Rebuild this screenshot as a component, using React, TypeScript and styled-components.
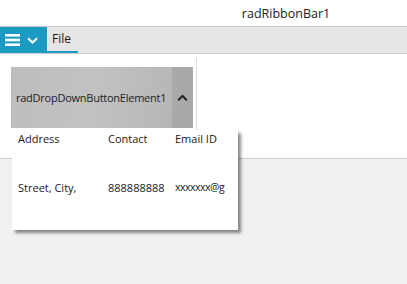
import React from 'react'
import styled, { createGlobalStyle } from 'styled-components'

const GlobalStyle = createGlobalStyle`
  html, body {
    margin: 0;
    padding: 0;
    background: #f0f0f0;
  }
  body {
    font-family: 'Open Sans', 'Noto Sans', sans-serif;
    color: #1a1a1a;
  }
`

const Window = styled.div`
  position: relative;
  width: 407px;
  height: 284px;
  display: flex;
  flex-direction: column;
  background: #f0f0f0;
  overflow: hidden;
`

const TitleBar = styled.div`
  height: 26px;
  background: #fff;
  display: flex;
  align-items: center;
  justify-content: center;
  padding-left: 165px;
  font-size: 12.5px;
  color: #222;
  border-bottom: 1px solid #c8c8c8;
`

const TabRow = styled.div`
  height: 26px;
  display: flex;
  background: #e6e6e6;
  border-bottom: 1px solid #cfcfcf;
`

const AppButton = styled.div`
  width: 47px;
  height: 26px;
  background: #1b9ac2;
  display: flex;
  align-items: center;
  gap: 7px;
  padding-left: 5px;
  box-sizing: border-box;
`

const Tab = styled.div<{ $active?: boolean }>`
  width: 31px;
  box-sizing: border-box;
  padding-left: 5px;
  font-size: 12px;
  line-height: 24px;
  border-bottom: 2px solid ${(p) => (p.$active ? '#1b9ac2' : 'transparent')};
`

const Ribbon = styled.div`
  height: 105px;
  background: #fff;
  border-bottom: 1px solid #cfcfcf;
  display: flex;
  align-items: stretch;
  padding: 4px 0 2px 0;
  box-sizing: border-box;
`

const Group = styled.div`
  width: 197px;
  box-sizing: border-box;
  padding: 9px 0 0 11px;
  border-right: 1px solid #dcdcdc;
`

const DropDownButton = styled.div`
  width: 182px;
  height: 61px;
  display: flex;
  background: linear-gradient(100deg, #bdbdbd 0%, #c2c2c2 45%, #b3b3b3 100%);
`

const DropLabel = styled.div`
  flex: 1;
  display: flex;
  align-items: center;
  padding-left: 5px;
  font-size: 11px;
  letter-spacing: -0.25px;
  color: #222;
`

const DropArrow = styled.div`
  width: 21px;
  background: #a9a9a9;
  display: flex;
  align-items: center;
  justify-content: center;
`

const Popup = styled.div`
  position: absolute;
  left: 12px;
  top: 130px;
  width: 226px;
  height: 100px;
  background: #fff;
  box-shadow: 3px 3px 3px rgba(0, 0, 0, 0.45);
  display: grid;
  grid-template-columns: 90px 67px 55px;
  grid-template-rows: 18px 1fr;
  padding-left: 6px;
  box-sizing: border-box;
`

const Cell = styled.div<{ $row?: boolean }>`
  font-size: 11px;
  white-space: nowrap;
  overflow: hidden;
  padding-top: ${(p) => (p.$row ? '32px' : '1px')};
`

const Email = styled(Cell)`
  font-size: 10.5px;
  letter-spacing: -0.5px;
`

const App: React.FC = () => {
  return (
    <Window>
      <GlobalStyle />
      <TitleBar>radRibbonBar1</TitleBar>
      <TabRow>
        <AppButton>
          <svg width="15" height="12" viewBox="0 0 15 12">
            <rect x="0" y="0" width="15" height="2.6" fill="#fff" />
            <rect x="0" y="4.7" width="15" height="2.6" fill="#fff" />
            <rect x="0" y="9.4" width="15" height="2.6" fill="#fff" />
          </svg>
          <svg width="11" height="7" viewBox="0 0 11 7">
            <path d="M1 1.2 L5.5 5.5 L10 1.2" fill="none" stroke="#fff" strokeWidth="2" />
          </svg>
        </AppButton>
        <Tab $active>File</Tab>
      </TabRow>
      <Ribbon>
        <Group>
          <DropDownButton>
            <DropLabel>radDropDownButtonElement1</DropLabel>
            <DropArrow>
              <svg width="11" height="8" viewBox="0 0 11 8">
                <path d="M1.2 6.2 L5.5 2 L9.8 6.2" fill="none" stroke="#222" strokeWidth="2" />
              </svg>
            </DropArrow>
          </DropDownButton>
        </Group>
      </Ribbon>
      <Popup>
        <Cell>Address</Cell>
        <Cell>Contact</Cell>
        <Cell>Email ID</Cell>
        <Cell $row>Street, City,</Cell>
        <Cell $row>888888888</Cell>
        <Email $row>xxxxxxx@g</Email>
      </Popup>
    </Window>
  )
}

export default App
